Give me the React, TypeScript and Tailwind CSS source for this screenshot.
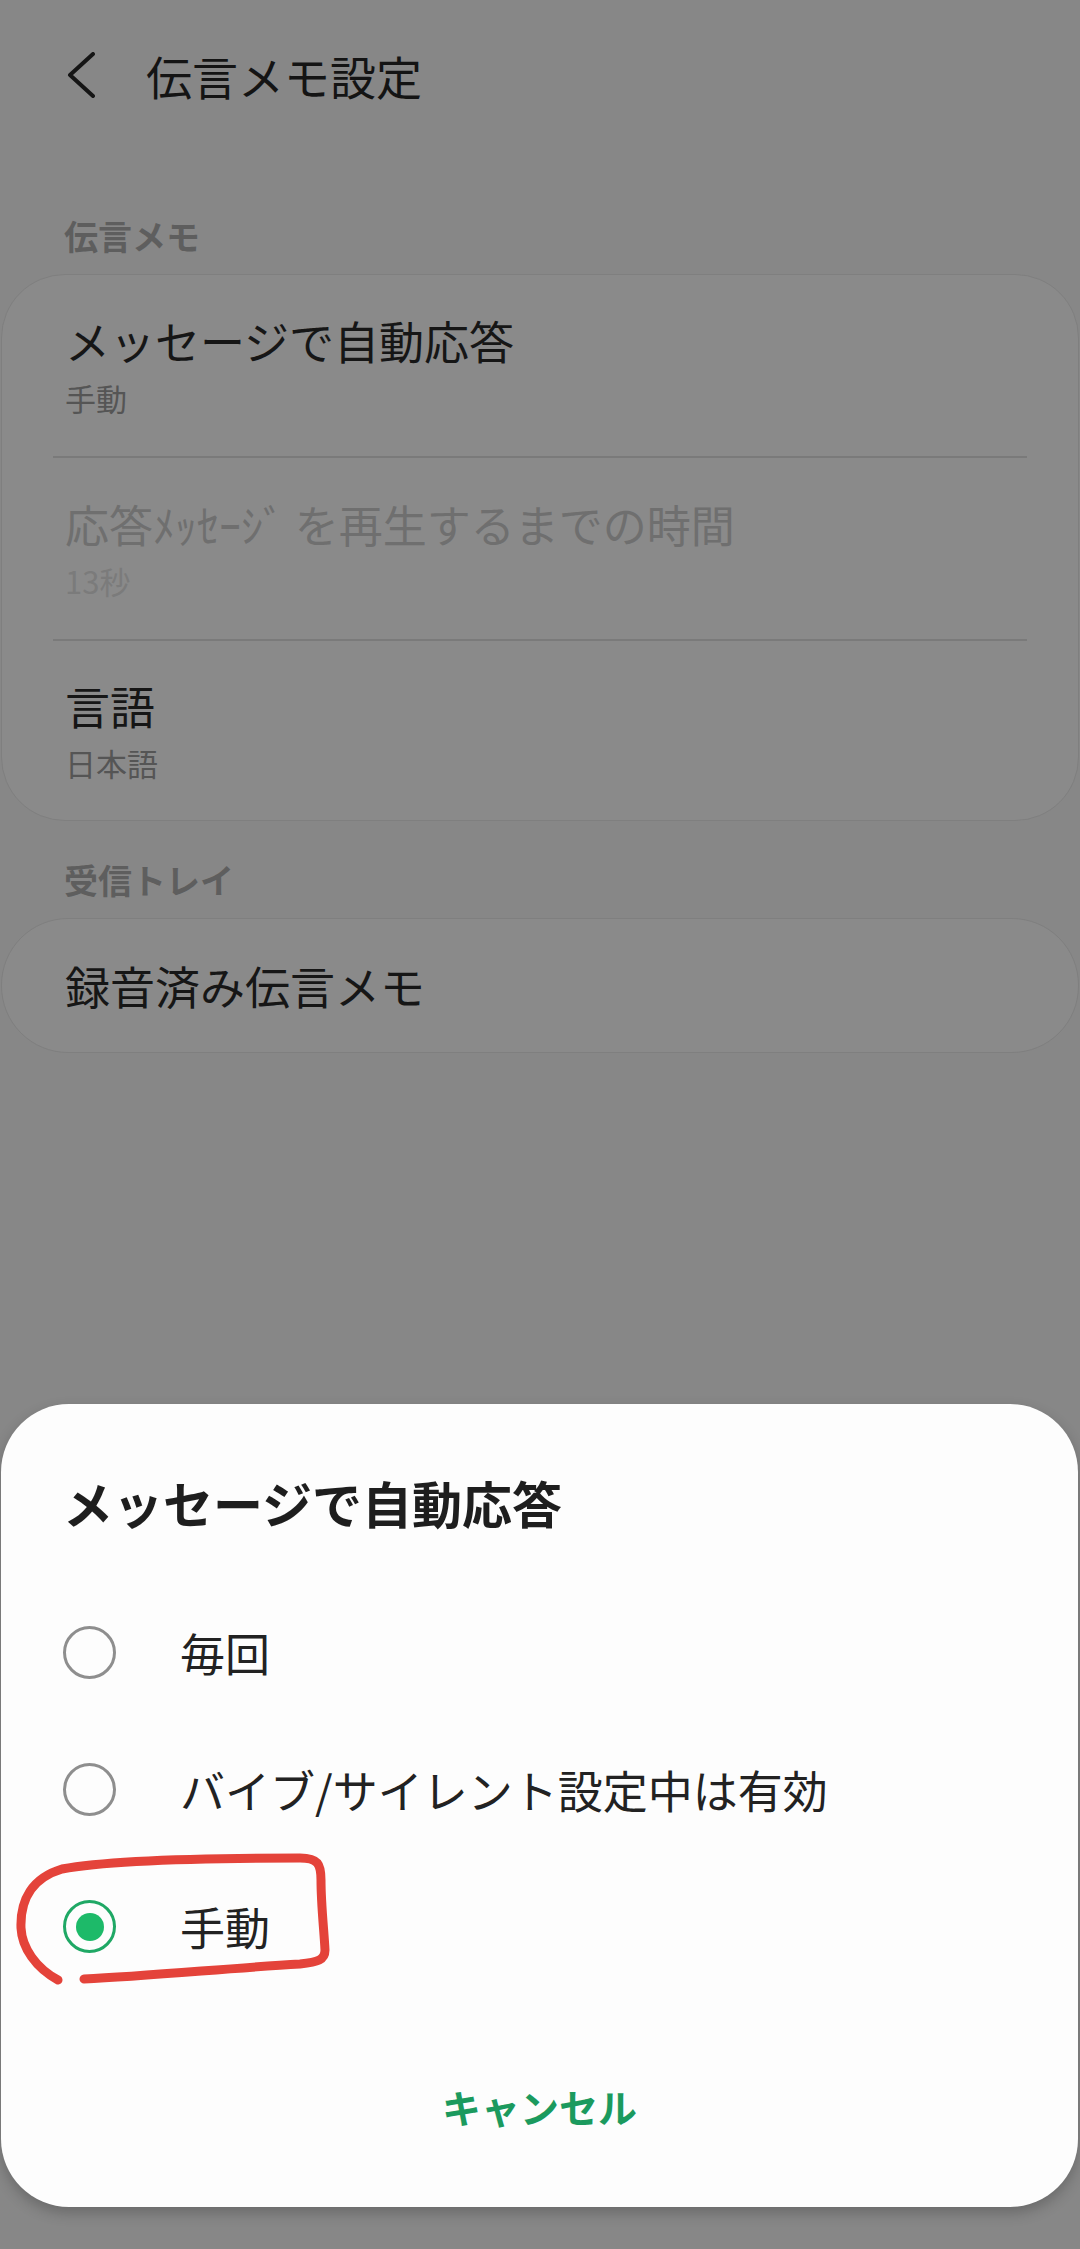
import React from "react";

const font = "font-['Noto_Sans_CJK_JP','Noto_Sans',sans-serif]";

type Item = {
  title: string;
  sub: string;
  disabled?: boolean;
};

const voicemailItems: Item[] = [
  { title: "メッセージで自動応答", sub: "手動" },
  { title: "応答ﾒｯｾｰｼﾞ を再生するまでの時間", sub: "13秒", disabled: true },
  { title: "言語", sub: "日本語" },
];

const options = [
  { label: "毎回", checked: false },
  { label: "バイブ/サイレント設定中は有効", checked: false },
  { label: "手動", checked: true },
];

const SectionLabel = ({ children }: { children: React.ReactNode }) => (
  <div className="pl-[64px] text-[34px] leading-[44px] font-bold text-[#5e5e5e] mb-[16px]">
    {children}
  </div>
);

const Radio = ({ checked }: { checked: boolean }) =>
  checked ? (
    <div className="w-[53px] h-[53px] rounded-full border-[3px] border-[#1fa865] flex items-center justify-center shrink-0">
      <div className="w-[28px] h-[28px] rounded-full bg-[#1dba69]" />
    </div>
  ) : (
    <div className="w-[53px] h-[53px] rounded-full border-[3px] border-[#8e8e8e] shrink-0" />
  );

export default function App() {
  return (
    <div className={`relative w-[1080px] h-[2249px] overflow-hidden bg-[#878787] ${font}`}>
      {/* Header */}
      <div className="h-[150px] flex items-center">
        <div className="w-[146px] pl-[66px] flex items-center">
          <svg width="32" height="46" viewBox="0 0 32 46" fill="none">
            <path d="M27 2 L4 23 L27 44" stroke="#151515" strokeWidth="4" strokeLinecap="round" strokeLinejoin="round" />
          </svg>
        </div>
        <div className="text-[46px] leading-[60px] text-[#141414]">伝言メモ設定</div>
      </div>

      {/* 伝言メモ */}
      <div className="pt-[64px]">
        <SectionLabel>伝言メモ</SectionLabel>
        <div className="mx-[1px] rounded-[64px] border border-[#7f7f7f] bg-[#8a8a8a] flex flex-col">
          {voicemailItems.map((item, i) => (
            <div key={i}>
              {i > 0 && <div className="h-[2px] mx-[51px] bg-[#7a7a7a]" />}
              <div className={`${i === 2 ? "h-[179px]" : "h-[181px]"} pl-[63px] flex flex-col justify-center`}>
                <div
                  className={`leading-[56px] ${
                    item.disabled ? "text-[44px] text-[#6f6f6f]" : "text-[45px] text-[#161616]"
                  }`}
                >
                  {item.title}
                </div>
                <div
                  className={`mt-[9px] text-[31px] leading-[40px] ${
                    item.disabled ? "text-[#7b7b7b]" : "text-[#555555]"
                  }`}
                >
                  {item.sub}
                </div>
              </div>
            </div>
          ))}
        </div>
      </div>

      {/* 受信トレイ */}
      <div className="pt-[37px]">
        <SectionLabel>受信トレイ</SectionLabel>
        <div className="mx-[1px] h-[135px] rounded-[67px] border border-[#7f7f7f] bg-[#8a8a8a] flex items-center pl-[63px]">
          <div className="text-[45px] leading-[56px] text-[#161616]">録音済み伝言メモ</div>
        </div>
      </div>

      {/* Bottom sheet dialog */}
      <div className="absolute left-[1px] right-[2px] top-[1404px] h-[803px] rounded-[68px] bg-[#fdfdfd] shadow-[0_6px_14px_rgba(0,0,0,0.22)] flex flex-col">
        <div className="pt-[67px] pl-[62px] text-[50px] leading-[62px] font-bold text-[#1e1e1e]">
          メッセージで自動応答
        </div>
        <div className="mt-[51px] flex flex-col">
          {options.map((opt) => (
            <div key={opt.label} className="h-[137px] flex items-center pl-[62px]">
              <Radio checked={opt.checked} />
              <div className="ml-[64px] text-[45px] leading-[56px] text-[#222222]">{opt.label}</div>
            </div>
          ))}
        </div>
        <div className="mt-[86px] text-center text-[39px] leading-[50px] font-bold text-[#1b9a5e]">
          キャンセル
        </div>
      </div>

      {/* Red hand-drawn annotation */}
      <svg
        className="absolute inset-0 pointer-events-none"
        width="1080"
        height="2249"
        viewBox="0 0 1080 2249"
        fill="none"
      >
        <path
          d="M58 1980 C36 1968 22 1948 21 1928 C20 1900 32 1878 62 1869 C110 1860 220 1858 300 1858 C318 1858 321 1864 321 1880 C321 1905 324 1930 325 1950 C325 1960 318 1962 300 1964 C230 1968 150 1976 84 1979"
          stroke="#e4433a"
          strokeWidth="9"
          strokeLinecap="round"
          strokeLinejoin="round"
        />
      </svg>
    </div>
  );
}
